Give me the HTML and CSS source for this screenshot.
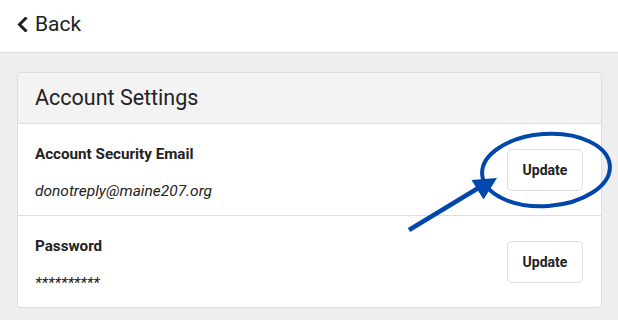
FILE: index.html
```html
<!DOCTYPE html>
<html>
<head>
<meta charset="utf-8">
<link rel="stylesheet" href="styles.css">
</head>
<body>
<div class="page">
  <header class="topbar">
    <a class="back">
      <svg class="chev" width="11" height="15" viewBox="0 0 11 15"><path d="M8.5 1.5 L2.5 7.5 L8.5 13.5" fill="none" stroke="#222" stroke-width="3" stroke-linecap="square"/></svg>
      <span>Back</span>
    </a>
  </header>
  <main class="main">
    <section class="card">
      <div class="card-head">Account Settings</div>
      <div class="row">
        <div class="info">
          <div class="label">Account Security Email</div>
          <div class="value">donotreply@maine207.org</div>
        </div>
        <button class="btn">Update</button>
      </div>
      <div class="row">
        <div class="info">
          <div class="label">Password</div>
          <div class="value">**********</div>
        </div>
        <button class="btn">Update</button>
      </div>
    </section>
  </main>
  <svg class="annot" width="618" height="320" viewBox="0 0 618 320">
    <ellipse cx="546" cy="170" rx="64" ry="36" transform="rotate(-4 546 170)" fill="none" stroke="#0047ab" stroke-width="4"/>
    <line x1="409" y1="230" x2="480" y2="187" stroke="#0047ab" stroke-width="4.5"/>
    <polygon points="497,178 471.5,180 483.5,199.5" fill="#0047ab"/>
  </svg>
</div>
</body>
</html>
```
FILE: styles.css
```css
* { box-sizing: border-box; }
html, body { margin: 0; padding: 0; }
body {
  background: #eeeeee;
  font-family: Roboto, "Liberation Sans", Arial, sans-serif;
  color: #222;
}
.page { position: relative; width: 618px; height: 320px; overflow: hidden; }
.topbar {
  height: 53px;
  background: #fff;
  border-bottom: 1px solid #dcdcdc;
  display: flex;
  align-items: center;
  padding-left: 17px;
  padding-bottom: 4px;
}
.back {
  display: flex;
  align-items: center;
  gap: 7px;
  font-size: 21px;
  color: #222;
  line-height: 24px;
}
.chev { display: block; }
.main { padding: 19px 16px 0 17px; }
.card {
  background: #fff;
  border: 1px solid #dddddd;
  border-radius: 4px;
  overflow: hidden;
}
.card-head {
  height: 51px;
  line-height: 50px;
  background: #f3f3f3;
  border-bottom: 1px solid #dddddd;
  padding-left: 17px;
  font-size: 21.5px;
  color: #222;
}
.row {
  height: 91px;
  display: flex;
  align-items: center;
  justify-content: space-between;
  padding: 0 18px 0 17px;
}
.row + .row { border-top: 1px solid #dddddd; height: 92px; }
.info { align-self: stretch; padding-top: 20px; }
.label {
  font-weight: 700;
  font-size: 15.2px;
  line-height: 20px;
}
.value {
  font-style: italic;
  font-size: 15.5px;
  line-height: 20px;
  margin-top: 17px;
}
.btn {
  width: 76px;
  height: 42px;
  background: #fff;
  border: 1px solid #dddddd;
  border-radius: 5px;
  font-family: Roboto, "Liberation Sans", Arial, sans-serif;
  font-weight: 700;
  font-size: 14px;
  color: #222;
  padding: 0;
}
.annot { position: absolute; left: 0; top: 0; pointer-events: none; }
```
